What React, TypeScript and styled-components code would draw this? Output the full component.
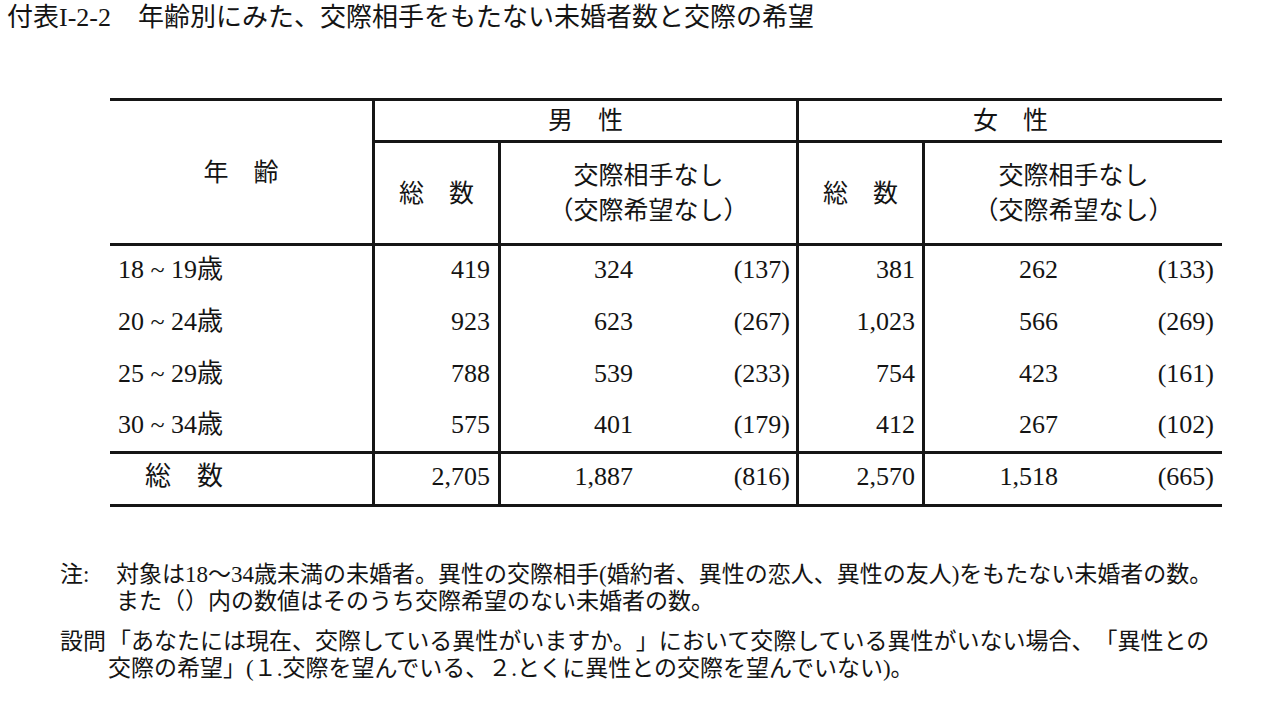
import React from "react";
import styled, { createGlobalStyle } from "styled-components";

const Global = createGlobalStyle`
  html, body {
    margin: 0;
    padding: 0;
    background: #ffffff;
  }
  body {
    font-family: "Liberation Serif", "Noto Sans CJK JP", serif;
    color: #141414;
    text-spacing-trim: space-all;
  }
`;

const Page = styled.div`
  width: 1280px;
  height: 728px;
  overflow: hidden;
  position: relative;
  background: #fff;
`;

const Title = styled.h1`
  margin: 0;
  padding: 2px 0 0 7px;
  display: flex;
  gap: 27px;
  font-size: 26px;
  line-height: 32px;
  font-weight: normal;
  white-space: nowrap;
`;

const Grid = styled.div`
  margin: 64px 0 0 110px;
  width: 1112px;
  display: grid;
  grid-template-columns: 262px 126px 143px 155px 126px 143px 157px;
  grid-template-rows: 42px 103px 52px 52px 52px 52px 53px;
  border-top: 3px solid #161616;
`;

type CellProps = {
  $left?: boolean;
  $bottom?: boolean;
  $align?: "left" | "right" | "center";
  $pl?: number;
  $pr?: number;
};

const Cell = styled.div<CellProps>`
  box-sizing: border-box;
  display: flex;
  align-items: center;
  justify-content: ${(p) =>
    p.$align === "right" ? "flex-end" : p.$align === "center" ? "center" : "flex-start"};
  padding-left: ${(p) => p.$pl ?? 0}px;
  padding-right: ${(p) => p.$pr ?? 0}px;
  padding-bottom: 4px;
  border-left: ${(p) => (p.$left ? "3px solid #161616" : "none")};
  border-bottom: ${(p) => (p.$bottom ? "3px solid #161616" : "none")};
  font-size: 26px;
  line-height: 30px;
  white-space: nowrap;
`;

const HeadCell = styled(Cell)`
  font-size: 25px;
  line-height: 35px;
  text-align: center;
  flex-direction: column;
  justify-content: center;
  align-items: center;
  padding-bottom: 0;
`;

const Notes = styled.div`
  margin: 54px 0 0 60px;
  display: flex;
  flex-direction: column;
  gap: 13px;
  font-size: 23px;
  line-height: 27px;
`;

const NoteRow = styled.div<{ $label: number }>`
  display: grid;
  grid-template-columns: ${(p) => p.$label}px auto;
  white-space: nowrap;
`;

const NoteLabel = styled.div``;
const NoteText = styled.div``;

const rows = [
  { age: "18 ~ 19歳", m: ["419", "324", "(137)"], f: ["381", "262", "(133)"] },
  { age: "20 ~ 24歳", m: ["923", "623", "(267)"], f: ["1,023", "566", "(269)"] },
  { age: "25 ~ 29歳", m: ["788", "539", "(233)"], f: ["754", "423", "(161)"] },
  { age: "30 ~ 34歳", m: ["575", "401", "(179)"], f: ["412", "267", "(102)"] },
];

const total = { m: ["2,705", "1,887", "(816)"], f: ["2,570", "1,518", "(665)"] };

function DataRow({
  label,
  m,
  f,
  last,
  isTotal,
}: {
  label: string;
  m: string[];
  f: string[];
  last: boolean;
  isTotal?: boolean;
}) {
  return (
    <>
      <Cell $bottom={last} $pl={isTotal ? 35 : 8}>
        {label}
      </Cell>
      <Cell $left $bottom={last} $align="right" $pr={8}>
        {m[0]}
      </Cell>
      <Cell $left $bottom={last} $align="right" $pr={8}>
        {m[1]}
      </Cell>
      <Cell $bottom={last} $align="right" $pr={6}>
        {m[2]}
      </Cell>
      <Cell $left $bottom={last} $align="right" $pr={7}>
        {f[0]}
      </Cell>
      <Cell $left $bottom={last} $align="right" $pr={7}>
        {f[1]}
      </Cell>
      <Cell $bottom={last} $align="right" $pr={8}>
        {f[2]}
      </Cell>
    </>
  );
}

export default function App() {
  return (
    <Page>
      <Global />
      <Title>
        <span>付表I-2-2</span>
        <span>年齢別にみた、交際相手をもたない未婚者数と交際の希望</span>
      </Title>
      <Grid>
        <HeadCell $bottom style={{ gridRow: "1 / span 2", gridColumn: "1" }}>
          年　齢
        </HeadCell>
        <HeadCell $left $bottom style={{ gridColumn: "2 / span 3" }}>
          男　性
        </HeadCell>
        <HeadCell $left $bottom style={{ gridColumn: "5 / span 3" }}>
          女　性
        </HeadCell>
        <HeadCell $left $bottom>
          総　数
        </HeadCell>
        <HeadCell $left $bottom style={{ gridColumn: "3 / span 2" }}>
          <span>交際相手なし</span>
          <span>（交際希望なし）</span>
        </HeadCell>
        <HeadCell $left $bottom>
          総　数
        </HeadCell>
        <HeadCell $left $bottom style={{ gridColumn: "6 / span 2" }}>
          <span>交際相手なし</span>
          <span>（交際希望なし）</span>
        </HeadCell>
        {rows.map((r, i) => (
          <DataRow key={r.age} label={r.age} m={r.m} f={r.f} last={i === rows.length - 1} />
        ))}
        <DataRow label="総　数" m={total.m} f={total.f} last isTotal />
      </Grid>
      <Notes>
        <NoteRow $label={56}>
          <NoteLabel>注:</NoteLabel>
          <NoteText>
            対象は18～34歳未満の未婚者。異性の交際相手(婚約者、異性の恋人、異性の友人)をもたない未婚者の数。
            <br />
            また（）内の数値はそのうち交際希望のない未婚者の数。
          </NoteText>
        </NoteRow>
        <NoteRow $label={48}>
          <NoteLabel>設問</NoteLabel>
          <NoteText>
            「あなたには現在、交際している異性がいますか。」において交際している異性がいない場合、「異性との
            <br />
            交際の希望」(１.交際を望んでいる、２.とくに異性との交際を望んでいない)。
          </NoteText>
        </NoteRow>
      </Notes>
    </Page>
  );
}
